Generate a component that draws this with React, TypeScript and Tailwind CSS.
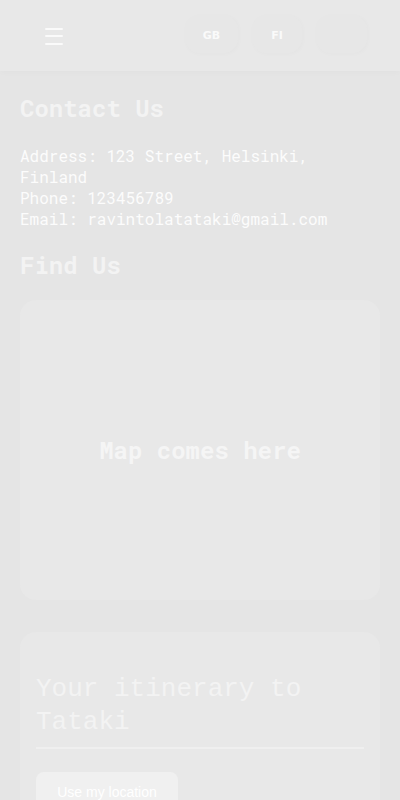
import React from 'react';

const mono = "font-['Roboto_Mono','DejaVu_Sans_Mono',monospace]";

const LangButton: React.FC<{ label?: string; className?: string }> = ({ label, className }) => (
  <button
    className={`h-[38px] pt-[5px] rounded-[14px] bg-[#e7e7e7] shadow-[1px_1px_4px_rgba(0,0,0,0.02)] flex items-center justify-center text-[11px] font-bold text-[#fafafa] font-['DejaVu_Sans',sans-serif] ${className ?? ''}`}
  >
    {label}
  </button>
);

export default function App() {
  return (
    <div className="min-h-[800px] w-full bg-[#e5e5e5] overflow-hidden">
      <header className="h-[71px] bg-[#e8e8e8] shadow-[0_2px_6px_rgba(0,0,0,0.02)] flex items-center pl-[45px] pr-[33px]">
        <div className="flex flex-col gap-[5.5px] mt-[1px]">
          <span className="block w-[18px] h-[2px] rounded bg-[#fafafa]" />
          <span className="block w-[18px] h-[2px] rounded bg-[#fafafa]" />
          <span className="block w-[18px] h-[2px] rounded bg-[#fafafa]" />
        </div>
        <div className="ml-auto flex items-center gap-[14px] mt-[-3px]">
          <LangButton label="GB" className="w-[53px]" />
          <LangButton label="FI" className="w-[50px]" />
          <LangButton className="w-[51px]" />
        </div>
      </header>

      <main className="px-5">
        <h1 className={`${mono} text-[24px] font-bold text-[#f3f3f3] mt-[21px] leading-[32px]`}>Contact Us</h1>
        <div className={`${mono} text-[16px] leading-[21px] text-[#fcfcfc] mt-[21px]`}>
          <p>Address: 123 Street, Helsinki, Finland</p>
          <p>Phone: 123456789</p>
          <p>Email: ravintolatataki@gmail.com</p>
        </div>

        <h2 className={`${mono} text-[24px] font-bold text-[#f3f3f3] mt-[20px] leading-[32px]`}>Find Us</h2>
        <div className="mt-[19px] h-[300px] rounded-[16px] bg-[#e8e8e8] flex items-center justify-center">
          <span className={`${mono} text-[24px] font-bold text-[#f5f5f5]`}>Map comes here</span>
        </div>

        <section className="mt-[32px] rounded-[16px] bg-[#e8e8e8] px-4 pt-[41px] pb-6">
          <h2 className="font-['Liberation_Mono',monospace] text-[26px] leading-[33px] text-[#f3f3f3]">
            Your itinerary to Tataki
          </h2>
          <div className="mt-[8px] h-[2px] bg-[#efefef]" />
          <button className="mt-[23px] w-[142px] h-[40px] rounded-[8px] bg-[#f0f0f0] text-white text-[14px] font-['Liberation_Sans',Arial,sans-serif] flex items-center justify-center">
            Use my location
          </button>
        </section>
      </main>
    </div>
  );
}
